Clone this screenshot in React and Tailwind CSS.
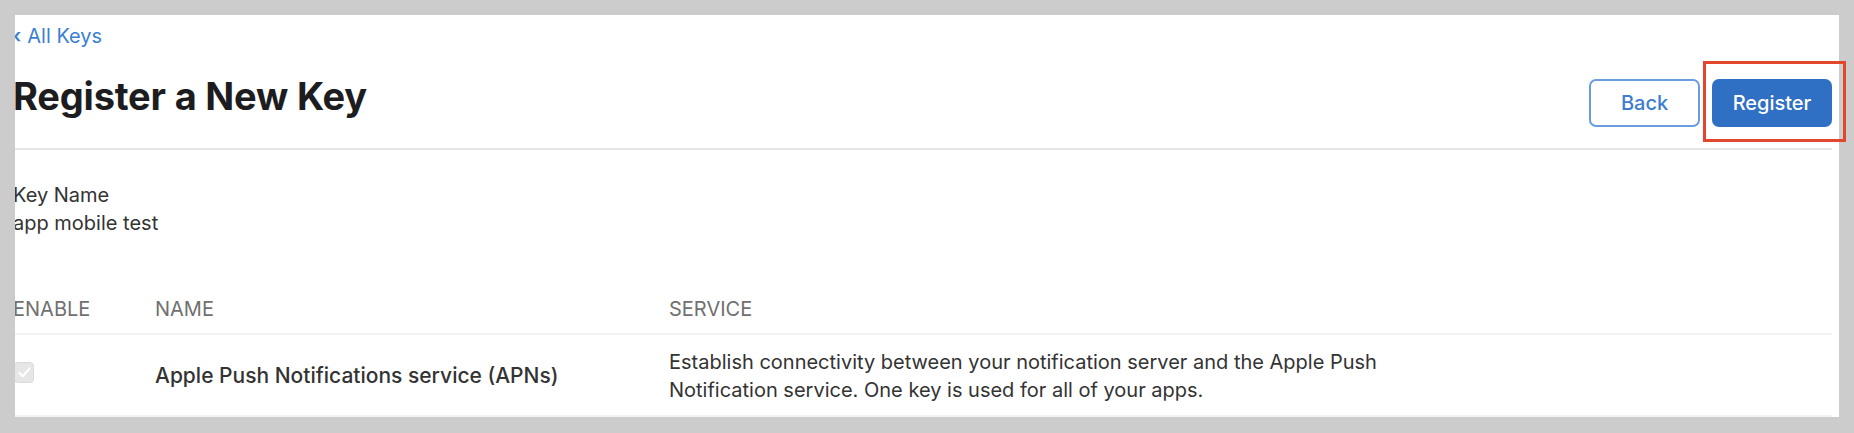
import React from 'react';

function CheckBox() {
  return (
    <div className="w-[20px] h-[21px] rounded-[4px] bg-[#e6e6e6] border border-[#dadada] flex items-center justify-center">
      <svg width="13" height="11" viewBox="0 0 13 11" fill="none">
        <path d="M1.5 6l3.2 3.3L11.5 1.5" stroke="#ffffff" strokeWidth="2.2" strokeLinecap="round" strokeLinejoin="round" />
      </svg>
    </div>
  );
}

export default function App() {
  return (
    <div className="relative w-[1854px] h-[433px] bg-[#cccccc] pt-[15px] pl-[15px] pr-[15px] pb-[16px] font-['Inter',sans-serif]">
      <div className="h-full bg-white overflow-hidden pr-[7px]">
        <div className="ml-[-2px]">
          {/* back link */}
          <div className="pt-[7px] text-[20px] leading-[28px] text-[#3c7fd1]">
            <span className="mr-[6px] font-semibold">‹</span>All Keys
          </div>

          {/* title row */}
          <div className="flex items-start justify-between mt-[23px] pb-[21px] border-b-2 border-[#e6e6e6]">
            <h1 className="text-[38px] leading-[46px] font-bold text-[#1d1d1f] tracking-[-0.005em]">Register a New Key</h1>
            <div className="flex gap-[12px] mt-[6px]">
              <button className="w-[111px] h-[48px] rounded-[7px] border-2 border-[#6a9de0] text-[#3d7dd0] text-[20px] font-medium">Back</button>
              <button className="w-[120px] h-[48px] rounded-[7px] bg-[#2f6fc4] text-white text-[20px] font-medium">Register</button>
            </div>
          </div>

          {/* key name */}
          <div className="mt-[31px] text-[20px] leading-[28px] text-[#333333]">
            <div>Key Name</div>
            <div>app mobile test</div>
          </div>

          {/* services table */}
          <div className="mt-[58px]">
            <div className="flex pb-[10px] border-b-2 border-[#f2f2f2] text-[20px] leading-[28px] text-[#707070] uppercase">
              <div className="w-[142px]">Enable</div>
              <div className="w-[514px]">Name</div>
              <div>Service</div>
            </div>
            <div className="flex items-center pt-[13px] pb-[11px] border-b-2 border-[#f2f2f2] text-[20px] leading-[28px] text-[#333333]">
              <div className="w-[142px] pl-[1px] -mt-[8px]">
                <CheckBox />
              </div>
              <div className="w-[514px] text-[21px] font-medium">Apple Push Notifications service (APNs)</div>
              <div className="w-[760px]">
                Establish connectivity between your notification server and the Apple Push Notification service. One key is used for all of your apps.
              </div>
            </div>
          </div>
        </div>
      </div>

      {/* highlight around the register button */}
      <div className="absolute left-[1703px] top-[61px] w-[143px] h-[81px] border-[3px] border-[#e2462d] pointer-events-none"></div>
    </div>
  );
}
